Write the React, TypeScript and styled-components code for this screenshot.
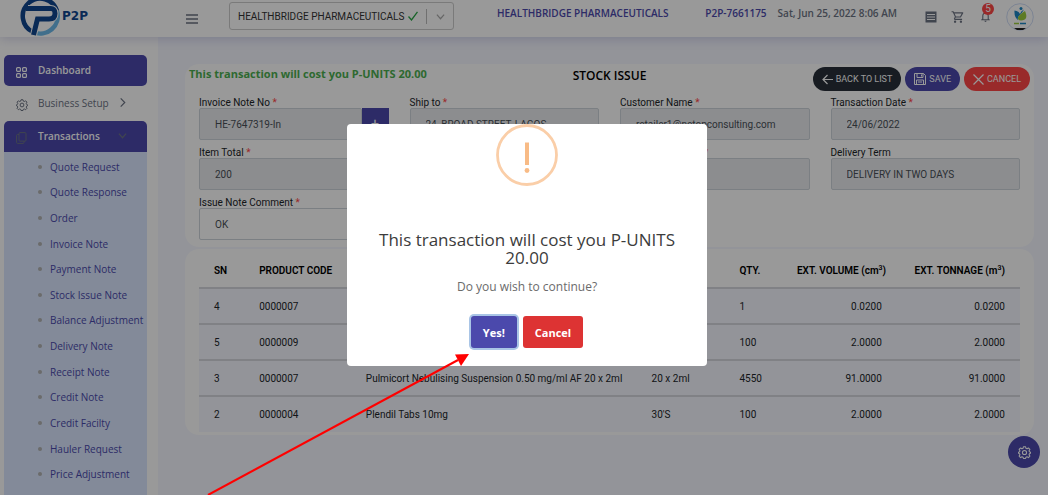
import React from "react";
import styled, { createGlobalStyle, css } from "styled-components";

const GlobalStyle = createGlobalStyle`
  * { box-sizing: border-box; }
  html, body { margin: 0; }
  body {
    background: #f5f7ff;
    color: #212529;
    font-family: Roboto, "Open Sans", sans-serif;
    font-size: 10px;
    overflow: hidden;
  }
  button, input { font-family: inherit; }
  a { text-decoration: none; color: inherit; }
`;

const purple = "#4b49ac";
const headingFont = `"Open Sans", "Noto Sans", sans-serif`;

const Page = styled.div`
  display: flex;
  flex-direction: column;
  min-height: 100vh;
`;

/* ---------- header ---------- */

const Header = styled.header`
  position: relative;
  display: flex;
  align-items: center;
  height: 37px;
  background: #fff;
  box-shadow: 0 2px 10px rgba(90, 90, 170, 0.25);
`;

const Brand = styled.a`
  display: flex;
  align-items: flex-end;
  width: 186px;
  height: 37px;
  padding-left: 20px;
  overflow: hidden;
  flex-shrink: 0;
`;

const BrandName = styled.span`
  padding-bottom: 12px;
  margin-left: 2px;
  color: #10468f;
  font: bold 12px/18px "DejaVu Sans", sans-serif;
`;

const IconButton = styled.button`
  display: flex;
  padding: 0;
  border: 0;
  background: none;
  color: #6c7383;
`;

const CompanyPicker = styled.div`
  display: flex;
  align-items: center;
  width: 225px;
  height: 28px;
  margin: 0 43px 5px 31px;
  padding: 0 8px;
  border: 1px solid #ccc;
  border-radius: 3px;
  color: #333;
`;

const CompanyInput = styled.input`
  flex: 1;
  min-width: 0;
  padding: 0;
  border: 0;
  background: none;
  color: #333;
  font-size: 10px;
`;

const Divider = styled.span`
  width: 1px;
  height: 15px;
  margin: 0 9px 0 8px;
  background: #bbb;
`;

const HeaderText = styled.span<{ $accent?: boolean }>`
  margin-bottom: 11px;
  font-family: ${headingFont};
  font-size: 10px;
  line-height: 16px;
  font-weight: 600;
  white-space: nowrap;
  color: ${(p) => (p.$accent ? purple : "#6c7383")};
`;

const HeaderGroup = styled.div`
  display: flex;
  align-items: center;
  gap: 11px;
  margin-left: auto;
`;

const Tools = styled.div`
  display: flex;
  align-items: center;
  gap: 14px;
  margin: 0 14px 4px 17px;
`;

const Bell = styled(IconButton)`
  position: relative;
`;

const Badge = styled.span`
  position: absolute;
  top: -7px;
  left: 3px;
  width: 12px;
  height: 12px;
  border-radius: 50%;
  background: #ff4747;
  color: #fff;
  font-size: 10px;
  line-height: 12px;
  text-align: center;
`;

/* ---------- sidebar ---------- */

const Body = styled.div`
  display: flex;
  flex: 1;
`;

const Sidebar = styled.nav`
  display: flex;
  flex-direction: column;
  width: 158px;
  flex-shrink: 0;
  padding: 18px 11px 0 4px;
  background: #fff;
  font-family: ${headingFont};
`;

const NavLink = styled.a<{ $active?: boolean; $open?: boolean }>`
  display: grid;
  grid-template-columns: 22px 1fr 14px;
  align-items: center;
  height: 31px;
  margin-bottom: ${(p) => (p.$open ? 0 : 2)}px;
  padding: 0 15px 2px 12px;
  border-radius: ${(p) => (p.$open ? "5px 5px 0 0" : "5px")};
  font-size: 10px;
  font-weight: 500;
  color: #6c7383;
  white-space: nowrap;
  ${(p) => p.$active && css`background: ${purple}; color: #fff; font-weight: 600;`}
`;

const NavIcon = styled.span`
  display: flex;
  padding-top: 5px;
`;

const Submenu = styled.ul`
  display: grid;
  grid-auto-rows: 1fr;
  flex: 1;
  margin: 0;
  padding: 2px 0 8px 34px;
  list-style: none;
  background: #dae7ff;
`;

const SubItem = styled.li`
  display: flex;
  align-items: center;
  gap: 8px;
  color: ${purple};
  font-size: 10px;
  font-weight: 500;
  white-space: nowrap;
  &::before {
    content: "";
    width: 4px;
    height: 4px;
    border-radius: 50%;
    background: #b2b2b2;
  }
`;

/* ---------- content ---------- */

const Content = styled.main`
  flex: 1;
  min-width: 0;
  display: flex;
  flex-direction: column;
  gap: 2px;
  padding: 27px 14px 0 27px;
`;

const Card = styled.section`
  padding: 0 14px;
  border-radius: 14px;
  background: #fff;
`;

const CardHead = styled.div`
  display: grid;
  grid-template-columns: 1fr auto 1fr;
  height: 30px;
  margin: 0 -10px;
`;

const CostNote = styled.strong`
  padding-top: 2px;
  color: #4caf50;
  font-family: ${headingFont};
  font-size: 11px;
  line-height: 16px;
`;

const Title = styled.h1`
  margin: 0;
  padding-top: 4px;
  color: #000;
  font-family: ${headingFont};
  font-size: 12px;
  line-height: 16px;
  font-weight: 600;
`;

const Actions = styled.div`
  display: flex;
  justify-content: flex-end;
  align-items: flex-start;
  gap: 4px;
  padding-top: 3px;
`;

const Pill = styled.button<{ $bg: string }>`
  display: flex;
  align-items: center;
  gap: 3px;
  height: 24px;
  padding: 0 9px;
  border: 0;
  border-radius: 12px;
  background: ${(p) => p.$bg};
  color: #fff;
  font-size: 9px;
  white-space: nowrap;
`;

const FormGrid = styled.form`
  display: grid;
  grid-template-columns: repeat(4, minmax(0, 1fr));
  column-gap: 21px;
  padding-bottom: 3px;
`;

const Field = styled.div`
  display: flex;
  flex-direction: column;
  height: 50px;
`;

const Label = styled.label`
  height: 14px;
  font-size: 10px;
  line-height: 18px;
  color: #212529;
`;

const Required = styled.span`
  color: #ff4747;
`;

const InputRow = styled.div`
  display: flex;
  height: 32px;
`;

const TextInput = styled.input`
  flex: 1;
  min-width: 0;
  padding: 0 15px;
  border: 1px solid #ced4da;
  border-radius: 2px;
  background: #fff;
  color: #495057;
  font-size: 10px;
  &:disabled { background: #e9ecef; }
`;

const AddButton = styled.button`
  width: 27px;
  padding: 0;
  border: 0;
  background: ${purple};
  color: #fff;
  font-size: 14px;
`;

const Table = styled.table`
  width: 100%;
  border-collapse: collapse;
  table-layout: fixed;
  th, td {
    height: 36px;
    padding: 0 15px;
    font-size: 10px;
    text-align: left;
    white-space: nowrap;
    border-bottom: 2px solid #d5d7de;
  }
  th { height: 39px; padding-top: 4px; color: #000; font-weight: 600; }
  td { background: #f5f7ff; }
  tr:last-child td { border-bottom: 0; }
  th:nth-last-child(-n + 2), td:nth-last-child(-n + 2) { text-align: right; }
  sup { font-size: 7px; line-height: 0; }
`;

const TableCard = styled(Card)`
  padding-bottom: 3px;
`;

const Fab = styled.button`
  position: fixed;
  right: 8px;
  bottom: 27px;
  display: flex;
  align-items: center;
  justify-content: center;
  width: 32px;
  height: 32px;
  padding: 0;
  border: 0;
  border-radius: 50%;
  background: ${purple};
  color: #fff;
`;

/* ---------- dialog ---------- */

const Backdrop = styled.div`
  position: fixed;
  inset: 0;
  display: flex;
  align-items: center;
  justify-content: center;
  padding: 5px 0 10px 6px;
  background: rgba(0, 0, 0, 0.4);
  font-family: ${headingFont};
`;

const Dialog = styled.div`
  display: flex;
  flex-direction: column;
  align-items: center;
  width: 360px;
  height: 242px;
  border-radius: 4px;
  background: #fff;
  text-align: center;
`;

const DialogTitle = styled.h2`
  margin: 45px 24px 0;
  color: #3c3c3c;
  font-size: 17px;
  line-height: 18px;
  font-weight: 400;
`;

const DialogText = styled.p`
  margin: 11px 0 20px;
  color: #6b6b6b;
  font-size: 12px;
  line-height: 18px;
`;

const DialogButtons = styled.div`
  display: flex;
  gap: 6px;
`;

const DialogButton = styled.button<{ $bg: string; $focus?: boolean }>`
  height: 32px;
  padding: 0 12px;
  border: 0;
  border-radius: 3px;
  background: ${(p) => p.$bg};
  color: #fff;
  font-size: 11px;
  font-weight: 700;
  ${(p) => p.$focus && css`box-shadow: 0 0 0 2px #a9c5e6;`}
`;

const Pointer = styled.svg`
  position: fixed;
  left: 0;
  bottom: 0;
  pointer-events: none;
`;

/* ---------- icons ---------- */

const Logo = () => (
  <svg width="40" height="42" viewBox="0 0 40 42" fill="none">
    <path d="M37 16A17.500 17.500 0 0 1 13 37" stroke="#6db9ea" strokeWidth="4.500" />
    <path d="M13 37A17.500 17.500 0 1 1 37 16" stroke="#10468f" strokeWidth="4.500" />
    <path d="M13.500 40 17.500 24H29Q35 24 35 18.500T30 13.500H8" stroke="#fff" strokeWidth="7" />
    <path d="M13.500 40 17.500 24H29Q35 24 35 18.500T30 13.500H6" stroke="#10468f" strokeWidth="5" />
  </svg>
);

const MenuIcon = () => (
  <svg width="12" height="10" viewBox="0 0 12 10" stroke="currentColor" strokeWidth="1.300">
    <path d="M0 1H12M0 5H12M0 9H12" />
  </svg>
);

const Check = () => (
  <svg width="10" height="10" viewBox="0 0 10 10" fill="none" stroke="#28a745" strokeWidth="1.300">
    <path d="M.5 5.500 3.500 9 9.500 .8" />
  </svg>
);

const Chevron = ({ down, size = 9, color = "currentColor" }: { down?: boolean; size?: number; color?: string }) => (
  <svg width={size} height={size} viewBox="0 0 10 10" fill="none" stroke={color} strokeWidth="1.300">
    <path d={down ? "M1 3 5 7.500 9 3" : "M3 .5 7.500 5 3 9.500"} />
  </svg>
);

const ListIcon = () => (
  <svg width="12" height="12" viewBox="0 0 12 12">
    <rect x=".5" y=".5" width="11" height="11" fill="#6c7383" />
    <path d="M2 3.500H10M2 6H10M2 8.500H10" stroke="#fff" strokeWidth="1" />
  </svg>
);

const CartIcon = () => (
  <svg width="14" height="14" viewBox="0 0 24 24" fill="currentColor">
    <path d="M15.550 13c.75 0 1.410-.41 1.750-1.030l3.580-6.490A.996.996 0 0 0 20.010 4H5.210l-.94-2H1v2h2l3.600 7.590-1.350 2.440C4.520 15.370 5.480 17 7 17h12v-2H7l1.100-2h7.450zM6.160 6h12.150l-2.760 5H8.530L6.160 6zM7 18a2 2 0 1 0 0 4 2 2 0 0 0 0-4zm10 0a2 2 0 1 0 0 4 2 2 0 0 0 0-4z" />
  </svg>
);

const BellIcon = () => (
  <svg width="13" height="13" viewBox="0 0 24 24" fill="currentColor">
    <path d="M12 22c1.100 0 2-.9 2-2h-4c0 1.100.9 2 2 2zm6-6v-5c0-3.070-1.630-5.640-4.500-6.320V2h-3v2.680C7.640 5.360 6 7.920 6 11v5l-2 2v1h16v-1l-2-2zm-2 1H8v-6c0-2.480 1.510-4.500 4-4.500s4 2.020 4 4.500v6z" />
  </svg>
);

const Avatar = () => (
  <svg width="28" height="28" viewBox="0 0 28 28">
    <circle cx="14" cy="14" r="13.300" fill="#fff" stroke="#cfdcf5" />
    <path d="M8.500 7.500Q13 8 14 11Q15 7.500 18 6.500Q16 10 14 12Q11 14 12 17Q8 14 8.500 7.500Z" fill="#1b86c4" />
    <circle cx="15" cy="5.500" r="1.500" fill="#1b86c4" />
    <path d="M19 8Q23 17 15 17.500Q11.500 17.500 12 14.500Q13 11.500 19 8Z" fill="#9ccc3c" />
    <path d="M8 20.500H13" stroke="#9ccc3c" strokeWidth="1.500" />
    <path d="M14 20.500H20" stroke="#1b86c4" strokeWidth="1.500" />
    <path d="M8 25H20L17 27H11Z" fill="#222" />
  </svg>
);

const GridIcon = () => (
  <svg width="11" height="11" viewBox="0 0 11 11" fill="none" stroke="currentColor" strokeWidth="1.200">
    <rect x=".6" y=".6" width="3.800" height="3.800" rx="1" />
    <rect x="6.600" y=".6" width="3.800" height="3.800" rx="1" />
    <rect x=".6" y="6.600" width="3.800" height="3.800" rx="1" />
    <rect x="6.600" y="6.600" width="3.800" height="3.800" rx="1" />
  </svg>
);

const CogIcon = ({ size = 12 }: { size?: number }) => (
  <svg width={size} height={size} viewBox="0 0 24 24" fill="none" stroke="currentColor" strokeWidth="2" strokeLinejoin="round">
    <path d="M10 1.500h4l.7 2.800 2 .8 2.500-1.500 2.700 2.700-1.500 2.500.8 2 1.800 .7v2l-1.800 .7-.8 2 1.500 2.500-2.700 2.700-2.500-1.500-2 .8-.7 2.300h-4l-.7-2.300-2-.8-2.500 1.500-2.700-2.700 1.500-2.500-.8-2-1.800-.7v-2l1.800-.7.8-2-1.500-2.500 2.700-2.700 2.500 1.500 2-.8z" />
    <circle cx="12" cy="12" r="3.800" />
  </svg>
);

const CopyIcon = () => (
  <svg width="11" height="12" viewBox="0 0 11 12" fill="none" stroke="#6c7383">
    <rect x="3" y=".6" width="7" height="8.500" rx="1" />
    <path d="M3 2.500H1.500Q.6 2.500 .6 3.500V10.500Q.6 11.400 1.500 11.400H7Q8 11.400 8 10.400V9" />
  </svg>
);

const BackIcon = () => (
  <svg width="11" height="11" viewBox="0 0 11 11" fill="none" stroke="#fff" strokeWidth="1.200">
    <path d="M11 5.500H1M5.500 1 1 5.500 5.500 10" />
  </svg>
);

const SaveIcon = () => (
  <svg width="12" height="12" viewBox="0 0 12 12" fill="none" stroke="#fff">
    <path d="M.5 .5H9.500L11.500 2.500V11.500H.5ZM3 .5V4.500H9V.5M2.500 11.500V7H9.500V11.500M7.500 1.500V3.500M4 9H8" />
  </svg>
);

const CloseIcon = () => (
  <svg width="11" height="11" viewBox="0 0 11 11" stroke="#fff" strokeWidth="1.200">
    <path d="M.5 .5 10.500 10.500M10.500 .5 .5 10.500" />
  </svg>
);

const WarningIcon = () => (
  <svg width="62" height="62" viewBox="0 0 62 62">
    <circle cx="31" cy="31" r="29.500" fill="none" stroke="#facea8" strokeWidth="2.800" />
    <path d="M29 18.500H33V41H29Z" fill="#f8bb86" />
    <circle cx="31" cy="46.500" r="2.400" fill="#f8bb86" />
  </svg>
);

/* ---------- data ---------- */

const submenu = [
  "Quote Request", "Quote Response", "Order", "Invoice Note", "Payment Note",
  "Stock Issue Note", "Balance Adjustment", "Delivery Note", "Receipt Note",
  "Credit Note", "Credit Facilty", "Hauler Request", "Price Adjustment",
];

type FieldData = { id: string; label: string; value: string; required?: boolean; add?: boolean; editable?: boolean };

const fields: FieldData[] = [
  { id: "invoice", label: "Invoice Note No", value: "HE-7647319-In", required: true, add: true },
  { id: "ship", label: "Ship to", value: "24, BROAD STREET, LAGOS", required: true },
  { id: "customer", label: "Customer Name", value: "retailer1@netopconsulting.com", required: true },
  { id: "date", label: "Transaction Date", value: "24/06/2022", required: true },
  { id: "total", label: "Item Total", value: "200", required: true },
  { id: "volume", label: "Total Volume", value: "", required: true },
  { id: "tonnage", label: "Total Tonnage (m)", value: "", required: true },
  { id: "term", label: "Delivery Term", value: "DELIVERY IN TWO DAYS" },
  { id: "comment", label: "Issue Note Comment", value: "OK", required: true, editable: true },
];

const rows = [
  ["4", "0000007", "", "", "1", "0.0200", "0.0200"],
  ["5", "0000009", "", "", "100", "2.0000", "2.0000"],
  ["3", "0000007", "Pulmicort Nebulising Suspension 0.50 mg/ml AF 20 x 2ml", "20 x 2ml", "4550", "91.0000", "91.0000"],
  ["2", "0000004", "Plendil Tabs 10mg", "30'S", "100", "2.0000", "2.0000"],
];

const FormField = ({ field }: { field: FieldData }) => (
  <Field>
    <Label htmlFor={field.id}>
      {field.label} {field.required && <Required>*</Required>}
    </Label>
    <InputRow>
      <TextInput id={field.id} defaultValue={field.value} disabled={!field.editable} />
      {field.add && <AddButton type="button">+</AddButton>}
    </InputRow>
  </Field>
);

export default function App() {
  return (
    <Page>
      <GlobalStyle />
      <Header>
        <Brand href="#">
          <Logo />
          <BrandName>P2P</BrandName>
        </Brand>
        <IconButton aria-label="Toggle menu"><MenuIcon /></IconButton>
        <CompanyPicker>
          <CompanyInput aria-label="Company" defaultValue="HEALTHBRIDGE PHARMACEUTICALS" />
          <Check />
          <Divider />
          <Chevron down color="#aaa" />
        </CompanyPicker>
        <HeaderText $accent>HEALTHBRIDGE PHARMACEUTICALS</HeaderText>
        <HeaderGroup>
          <HeaderText $accent>P2P-7661175</HeaderText>
          <HeaderText>Sat, Jun 25, 2022 8:06 AM</HeaderText>
          <Tools>
            <IconButton aria-label="List"><ListIcon /></IconButton>
            <IconButton aria-label="Cart"><CartIcon /></IconButton>
            <Bell aria-label="Notifications"><BellIcon /><Badge>5</Badge></Bell>
            <IconButton aria-label="Account"><Avatar /></IconButton>
          </Tools>
        </HeaderGroup>
      </Header>
      <Body>
        <Sidebar>
          <NavLink href="#" $active><NavIcon><GridIcon /></NavIcon>Dashboard</NavLink>
          <NavLink href="#"><NavIcon><CogIcon /></NavIcon>Business Setup<Chevron /></NavLink>
          <NavLink href="#" $active $open><NavIcon><CopyIcon /></NavIcon>Transactions<Chevron down color="#6c7383" /></NavLink>
          <Submenu>
            {submenu.map((item) => (
              <SubItem key={item}><a href="#">{item}</a></SubItem>
            ))}
          </Submenu>
        </Sidebar>
        <Content>
          <Card>
            <CardHead>
              <CostNote>This transaction will cost you P-UNITS 20.00</CostNote>
              <Title>STOCK ISSUE</Title>
              <Actions>
                <Pill $bg="#282f3a"><BackIcon />BACK TO LIST</Pill>
                <Pill $bg={purple}><SaveIcon />SAVE</Pill>
                <Pill $bg="#ff4747"><CloseIcon />CANCEL</Pill>
              </Actions>
            </CardHead>
            <FormGrid>
              {fields.map((f) => <FormField key={f.id} field={f} />)}
            </FormGrid>
          </Card>
          <TableCard>
            <Table>
              <colgroup>
                <col style={{ width: "5.500%" }} />
                <col style={{ width: "13%" }} />
                <col />
                <col style={{ width: "10.700%" }} />
                <col style={{ width: "7%" }} />
                <col style={{ width: "14%" }} />
                <col style={{ width: "15%" }} />
              </colgroup>
              <thead>
                <tr>
                  <th>SN</th><th>PRODUCT CODE</th><th aria-label="Product name" /><th aria-label="Pack size" /><th>QTY.</th>
                  <th>EXT. VOLUME (cm<sup>3</sup>)</th><th>EXT. TONNAGE (m<sup>3</sup>)</th>
                </tr>
              </thead>
              <tbody>
                {rows.map((r) => (
                  <tr key={r[0]}>{r.map((c, i) => <td key={i}>{c}</td>)}</tr>
                ))}
              </tbody>
            </Table>
          </TableCard>
        </Content>
      </Body>
      <Fab aria-label="Settings"><CogIcon size={13} /></Fab>
      <Backdrop>
        <Dialog role="dialog" aria-labelledby="dialog-title">
          <WarningIcon />
          <DialogTitle id="dialog-title">This transaction will cost you P-UNITS 20.00</DialogTitle>
          <DialogText>Do you wish to continue?</DialogText>
          <DialogButtons>
            <DialogButton $bg={purple} $focus>Yes!</DialogButton>
            <DialogButton $bg="#dd3333">Cancel</DialogButton>
          </DialogButtons>
        </Dialog>
      </Backdrop>
      <Pointer width="480" height="150" viewBox="0 0 480 150">
        <path d="M208 150 458 15" stroke="#f00" strokeWidth="2" />
        <path d="M469 9 455 9.500 461 21Z" fill="#f00" />
      </Pointer>
    </Page>
  );
}
